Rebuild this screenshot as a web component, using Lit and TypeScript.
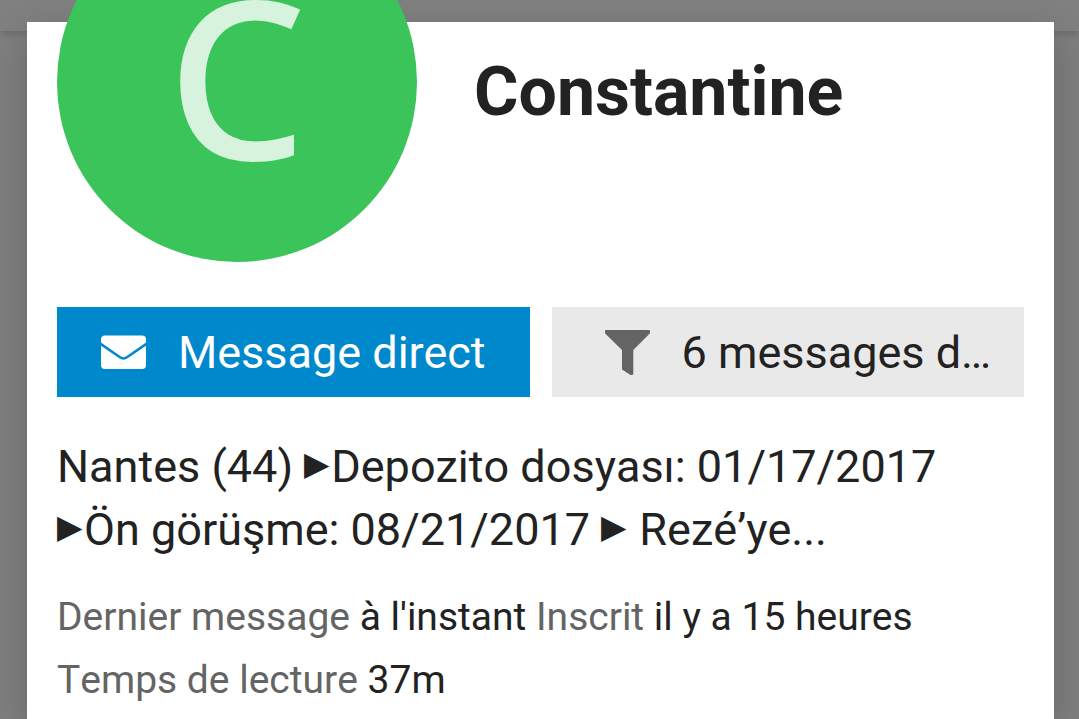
import { LitElement, html, css } from "lit";
import { customElement, property } from "lit/decorators.js";

@customElement("user-card")
class UserCard extends LitElement {
  @property() name = "";

  static styles = css`
    :host { display: block; flex: 1; min-width: 0; padding: 0 30px; background: #fff; box-shadow: 0 12px 36px rgba(0, 0, 0, 0.2); font-kerning: none; }
    .head { display: flex; gap: 57px; }
    .avatar { flex: none; width: 360px; height: 360px; margin-top: -120px; border-radius: 50%; background: #3ac45a; }
    .avatar svg { display: block; width: 100%; height: 100%; }
    h1 { margin: 30px 0 0; font-size: 68px; line-height: 80px; font-weight: 700; }
    .actions { display: grid; grid-template-columns: 1fr 1fr; gap: 22px; margin-top: 45px; }
    button { display: flex; align-items: center; justify-content: center; min-width: 0; height: 90px; padding: 0 30px 0 53px; border: 0; border-radius: 0; font: 45px/58px Roboto, sans-serif; background: #e9e9e9; color: #222; }
    button span { overflow: hidden; text-overflow: ellipsis; white-space: nowrap; padding-top: 2px; }
    button svg { flex: none; width: 45px; height: 45px; margin-right: 32px; fill: #646464; }
    .primary { padding: 0 32px; background: #0088cc; color: #fff; }
    .primary svg { fill: #fff; }
    .fold { fill: none; stroke: #0088cc; stroke-width: 2.6; stroke-linejoin: round; }
    .bio { margin: 38px 0 0; font-size: 45px; line-height: 63px; }
    .arrow { margin-right: 2px; font-size: 33px; line-height: 1; vertical-align: 7px; }
    .meta { margin: 25px 0 0; font-size: 39px; line-height: 63px; }
    .label { color: #646464; }
  `;

  render() {
    const arrow = html`<span class="arrow">▶</span>`;
    return html`
      <div class="head">
        <div class="avatar">
          <svg viewBox="0 0 360 360" role="img" aria-label="C">
            <text x="180" y="258" text-anchor="middle" font-family="Noto Sans, sans-serif" font-weight="500" font-size="220" fill="#fff" fill-opacity="0.8">C</text>
          </svg>
        </div>
        <h1>${this.name}</h1>
      </div>
      <div class="actions">
        <button class="primary" type="button">
          <svg viewBox="0 0 45 45" aria-hidden="true"><rect y="5.500" width="45" height="33.500" rx="4"/><path class="fold" d="M-1 13.500 19 27.300Q22.500 29.700 26 27.300L46 13.500"/></svg>
          <span>Message direct</span>
        </button>
        <button type="button">
          <svg viewBox="0 0 45 45" aria-hidden="true"><path d="M1 0H44Q45 0 45 1V2.500Q45 3.300 44.300 4L28.300 20V43.500Q28.300 45 27 45H25.500L17 39.500V20L.7 4Q0 3.300 0 2.500V1Q0 0 1 0Z"/></svg>
          <span>6 messages dans le sujet</span>
        </button>
      </div>
      <p class="bio">Nantes (44) ${arrow}Depozito dosyası: 01/17/2017 ${arrow}Ön görüşme: 08/21/2017 ${arrow} Rezé’ye...</p>
      <p class="meta"><span class="label">Dernier message</span> à l'instant <span class="label">Inscrit</span> il y a 15 heures <span class="label">Temps de lecture</span> 37m</p>
    `;
  }
}

@customElement("app-root")
class AppRoot extends LitElement {
  static styles = css`
    :host { display: grid; box-sizing: border-box; min-height: 100vh; grid-template-columns: 27px minmax(0, 1fr) 25px; grid-template-rows: 22px 9px 1fr; background: #7f7f7f; color: #222; font-family: Roboto, sans-serif; overflow: hidden; }
    .bar { grid-area: 1 / 1 / 3 / 4; background: #808080; box-shadow: 0 2px 8px rgba(0, 0, 0, 0.2); }
    user-card { grid-area: 2 / 2 / 4 / 3; }
  `;

  render() {
    return html`
      <header class="bar"></header>
      <user-card name="Constantine"></user-card>
    `;
  }
}
